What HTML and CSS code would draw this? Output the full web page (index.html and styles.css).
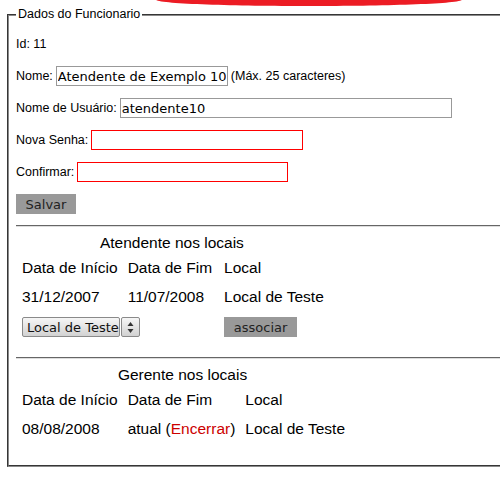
FILE: index.html
```html
<!DOCTYPE html>
<html lang="pt">
<head>
<meta charset="utf-8">
<title>Dados do Funcionario</title>
<link rel="stylesheet" href="styles.css">
</head>
<body>
<svg class="logo-strip" width="500" height="7" viewBox="0 0 500 7" aria-hidden="true">
  <path d="M156,0 C168,8 450,8 462,0 Z" fill="#ec1c24"/>
</svg>
<fieldset class="panel">
  <legend class="panel-title">Dados do Funcionario</legend>
  <div class="form">
    <div class="row">Id: 11</div>
    <div class="row">
      <label>Nome:</label>
      <input class="field w-nome" type="text" value="Atendente de Exemplo 10">
      <span>(Máx. 25 caracteres)</span>
    </div>
    <div class="row">
      <label>Nome de Usuário:</label>
      <input class="field w-user" type="text" value="atendente10">
    </div>
    <div class="row">
      <label>Nova Senha:</label>
      <input class="field field-err w-senha" type="password">
    </div>
    <div class="row">
      <label>Confirmar:</label>
      <input class="field field-err w-conf" type="password">
    </div>
    <div class="row">
      <button class="btn w-salvar" type="button">Salvar</button>
    </div>
  </div>

  <hr class="sep">

  <table class="locais locais-a">
    <caption>Atendente nos locais</caption>
    <tr><th>Data de Início</th><th>Data de Fim</th><th>Local</th></tr>
    <tr><td>31/12/2007</td><td>11/07/2008</td><td>Local de Teste</td></tr>
    <tr>
      <td colspan="2">
        <div class="select">
          <span class="sel-main">Local de Teste</span>
          <span class="sel-arrows">
            <svg width="7" height="13" viewBox="0 0 7 13"><path d="M3.5,1 L6.5,5 L0.5,5 Z M3.5,12 L6.5,8 L0.5,8 Z" fill="#333"/></svg>
          </span>
        </div>
      </td>
      <td><button class="btn w-assoc" type="button">associar</button></td>
    </tr>
  </table>

  <hr class="sep sep-2">

  <table class="locais">
    <caption>Gerente nos locais</caption>
    <tr><th>Data de Início</th><th>Data de Fim</th><th>Local</th></tr>
    <tr><td>08/08/2008</td><td>atual (<a class="link-red" href="#">Encerrar</a>)</td><td>Local de Teste</td></tr>
  </table>
</fieldset>
</body>
</html>
```
FILE: styles.css
```css
html { overflow: hidden; background: #fff; }
body { margin: 0; font-family: "Liberation Sans", Arial, sans-serif; color: #000; }

.logo-strip { display: block; }

.panel {
  margin: 0 0 0 7px;
  width: 520px;
  border: 2px groove #8a8a8a;
  padding: 0 7px 22px 7px;
}
.panel-title {
  font-size: 12.5px;
  line-height: 15px;
  padding: 0 2px;
}

.form {
  display: flex;
  flex-direction: column;
  gap: 12px;
  padding-top: 12px;
  font-size: 12.5px;
}
.row {
  display: flex;
  align-items: center;
  gap: 3px;
  height: 20px;
}
.field {
  box-sizing: border-box;
  height: 20px;
  margin: 0;
  border: 1px solid #999;
  padding: 0 1px;
  font-family: "DejaVu Sans", sans-serif;
  font-size: 13px;
  color: #000;
  background: #fff;
  outline: none;
}
.field-err { border-color: #f00; }
.w-nome { width: 172px; }
.w-user { width: 332px; }
.w-senha { width: 212px; }
.w-conf { width: 211px; }

.btn {
  box-sizing: border-box;
  height: 20px;
  margin: 0;
  border: none;
  background: #999;
  color: #222;
  font-family: "DejaVu Sans", sans-serif;
  font-size: 13px;
  padding: 0;
}
.w-salvar { width: 60px; }
.w-assoc { width: 73px; }

.sep {
  margin: 11px 0 0 0;
  border: none;
  border-top: 1px solid #666;
  border-bottom: 1px solid #ddd;
  height: 0;
}
.sep-2 { margin-top: 14px; }

.locais {
  border-collapse: separate;
  border-spacing: 0;
  font-size: 15.5px;
  line-height: 17px;
}
.locais caption {
  padding: 7px 0 2px;
}
.locais th, .locais td {
  text-align: left;
  font-weight: normal;
  padding: 6px 4px 6px 6px;
  white-space: nowrap;
  vertical-align: middle;
}
.locais-a th:nth-child(2) { padding-right: 6px; }
.link-red { color: #c00; text-decoration: none; }

.select {
  display: flex;
  gap: 1px;
  height: 20px;
}
.sel-main, .sel-arrows {
  box-sizing: border-box;
  height: 20px;
  border: 1px solid #8a8a8a;
  border-radius: 2px;
  background: linear-gradient(#f6f6f6, #d2d2d2);
  display: flex;
  align-items: center;
}
.sel-main {
  width: 98px;
  padding: 0 4px;
  font-family: "DejaVu Sans", sans-serif;
  font-size: 13px;
  color: #111;
}
.sel-arrows {
  width: 19px;
  justify-content: center;
}
```
